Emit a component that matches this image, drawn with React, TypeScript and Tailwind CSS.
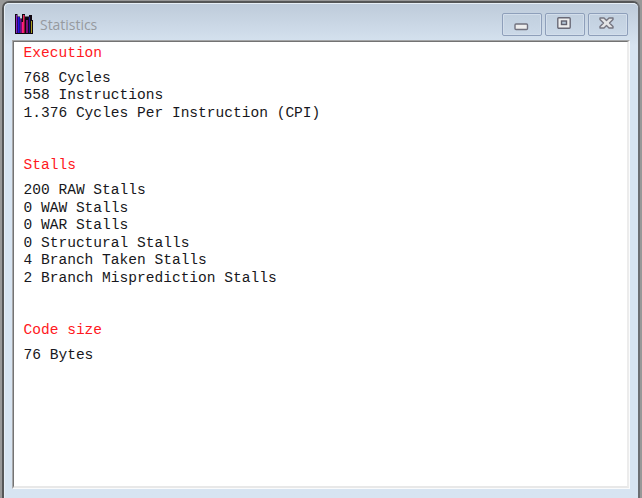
import React from "react";

type Section = { title: string; lines: string[] };

const sections: Section[] = [
  {
    title: "Execution",
    lines: ["768 Cycles", "558 Instructions", "1.376 Cycles Per Instruction (CPI)"],
  },
  {
    title: "Stalls",
    lines: [
      "200 RAW Stalls",
      "0 WAW Stalls",
      "0 WAR Stalls",
      "0 Structural Stalls",
      "4 Branch Taken Stalls",
      "2 Branch Misprediction Stalls",
    ],
  },
  { title: "Code size", lines: ["76 Bytes"] },
];

function BooksIcon() {
  return (
    <svg width="18" height="20" viewBox="0 0 18 20">
      <path d="M0 0h2.5v2.5H5v2h2V0h3v2.5h4V1h3v5h1v14H0z" fill="#10060f" />
      <path d="M1 1h1.2v18H1z" fill="#8a1fc0" />
      <path d="M2.7 3h2v16h-2z" fill="#2414e0" />
      <path d="M5.2 5h1.2v14H5.2z" fill="#701ab0" />
      <path d="M6.6 8h1.7v11H6.6z" fill="#ff1494" />
      <path d="M8 1h1.5v18H8z" fill="#f02858" />
      <path d="M11 6h2v13h-2z" fill="#860a78" />
      <path d="M13.8 3h1.2v16h-1.2z" fill="#18188c" />
      <path d="M16 7h1v12h-1z" fill="#a89e20" />
    </svg>
  );
}

function CaptionButton({ label, children }: { label: string; children: React.ReactNode }) {
  return (
    <button
      aria-label={label}
      className="flex h-[23px] w-10 items-center justify-center rounded-[2px] border border-[#8e9fba] bg-linear-to-b from-[#c1cfde] to-[#cbd9e8] shadow-[inset_0_0_0_1px_#d3deeb]"
    >
      {children}
    </button>
  );
}

export default function App() {
  return (
    <div className="flex h-[498px] w-[642px] overflow-hidden bg-[#989898] pt-px pr-[2px] pl-[2px]">
      <div className="flex min-w-0 flex-1 flex-col rounded-t-[7px] border-x-2 border-t-2 border-[#555657] border-r-[#6b6e72] bg-[#d7e4f1]">
        <div className="flex min-h-0 flex-1 flex-col rounded-t-[5px] border-t border-l border-[#e6eef6] bg-linear-to-b from-[#becbda] to-[#d7e4f1] to-[42px] pr-2 pl-[7px]">
          <header className="flex h-9 shrink-0 items-start pr-0.5 pl-[3px]">
            <div className="pt-[10px]">
              <BooksIcon />
            </div>
            <h1 className="ml-[7px] pt-[11px] font-['Open_Sans',sans-serif] text-[14px] leading-[20px] tracking-[-0.03px] text-[#969a9f]">
              Statistics
            </h1>
            <div className="mt-[9px] ml-auto flex gap-[3px]">
              <CaptionButton label="Minimize">
                <svg width="15" height="8" viewBox="0 0 15 8" className="mt-1 -ml-0.5">
                  <rect x="1" y="1" width="12.5" height="5.5" rx="1" fill="#eeeeee" stroke="#71717e" strokeWidth="1.4" />
                </svg>
              </CaptionButton>
              <CaptionButton label="Maximize">
                <svg width="14" height="12" viewBox="0 0 14 12" className="-mt-1 -ml-0.5">
                  <rect x=".8" y=".8" width="12.4" height="10.4" rx="1" fill="#eeeeee" stroke="#696976" strokeWidth="1.4" />
                  <rect x="4.5" y="4" width="5" height="3.5" fill="#b5c6d6" stroke="#62626f" strokeWidth="1.4" />
                </svg>
              </CaptionButton>
              <CaptionButton label="Close">
                <svg width="15" height="12" viewBox="0 0 15 12" className="-mt-1 -ml-1">
                  <path
                    d="M1 1h4l2.5 2.4L10 1h4v1.5L10.5 6 14 9.5V11h-4L7.5 8.6 5 11H1V9.5L4.5 6 1 2.5z"
                    fill="#e4e5e6"
                    stroke="#757580"
                    strokeWidth="1.4"
                    strokeLinejoin="round"
                  />
                </svg>
              </CaptionButton>
            </div>
          </header>
          <main className="mb-[9px] min-h-0 flex-1 border-t border-r border-b border-l border-t-[#a4a5a6] border-r-[#fafbfc] border-b-[#fafbfc] border-l-[#a7a8aa]">
            <div className="h-full border-t border-r-2 border-b-2 border-l border-t-[#737373] border-r-[#ececec] border-b-[#e8e8e8] border-l-[#747474] bg-white pt-[2.5px] pl-[9.5px] font-['Liberation_Mono','Courier_New',monospace] text-[14.55px] leading-[17.5px] text-[#171720]">
              {sections.map((section) => (
                <section key={section.title} className="mb-[35px]">
                  <h2 className="mb-[7.5px] text-[#ff1822]">{section.title}</h2>
                  {section.lines.map((line) => (
                    <p key={line}>{line}</p>
                  ))}
                </section>
              ))}
            </div>
          </main>
        </div>
      </div>
    </div>
  );
}
